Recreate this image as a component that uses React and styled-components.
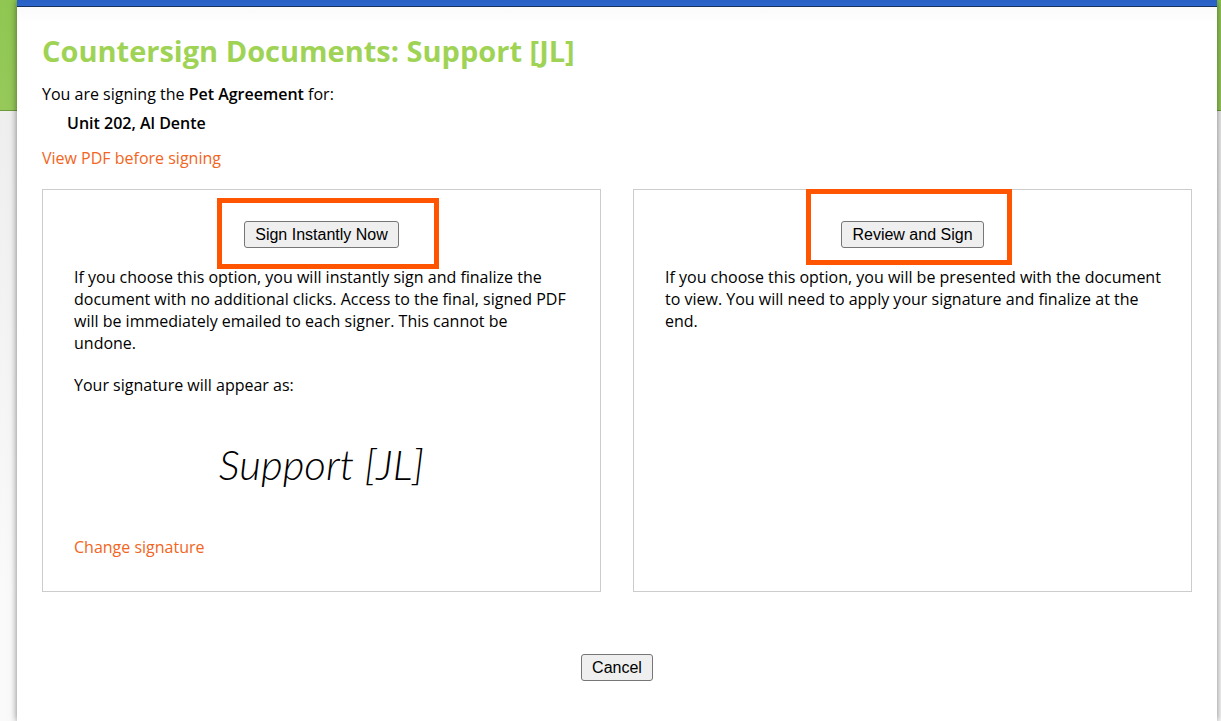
import React from 'react'
import styled, { createGlobalStyle } from 'styled-components';

const App = () => {
  return (
    <Backdrop>
      <GlobalStyle />
      <Page>
        <TopBar />
        <Content>
          <Title>Countersign Documents: Support [JL]</Title>
          <Intro>You are signing the <strong>Pet Agreement</strong> for:</Intro>
          <Signee>Unit 202, Al Dente</Signee>
          <Link href="#pdf">View PDF before signing</Link>

          <Options>
            <Option>
              <ButtonArea>
                <Button type="button">Sign Instantly Now</Button>
                <Highlight $inset="-23px -40px -21px -27px" />
              </ButtonArea>
              <Text>
                If you choose this option, you will instantly sign and finalize the document with no
                additional clicks. Access to the final, signed PDF will be immediately emailed to each
                signer. This cannot be undone.
              </Text>
              <Text>Your signature will appear as:</Text>
              <Signature>Support [JL]</Signature>
              <Link href="#signature">Change signature</Link>
            </Option>

            <Option>
              <ButtonArea>
                <Button type="button">Review and Sign</Button>
                <Highlight $inset="-32px -28px -17px -35px" />
              </ButtonArea>
              <Text>
                If you choose this option, you will be presented with the document to view. You will
                need to apply your signature and finalize at the end.
              </Text>
            </Option>
          </Options>

          <Footer>
            <Button type="button">Cancel</Button>
          </Footer>
        </Content>
      </Page>
    </Backdrop>
  )
}

const GlobalStyle = createGlobalStyle`
    * {
        box-sizing : border-box;
    }

    body {
        margin : 0;
        color : #000;
        font-family : "Trebuchet MS", "Open Sans", sans-serif;
        font-size : 16px;
        line-height : 22px;
    }

    strong {
        font-weight : 600;
    }
`;

const Backdrop = styled.div`
    min-height : 100vh;
    padding : 0 4px 0 17px;
    background :
        linear-gradient(#8fc752, #96c95a) 0 0 / 100% 110px no-repeat,
        linear-gradient(#6f9a3c, #6f9a3c) 0 110px / 100% 1px no-repeat,
        linear-gradient(#eeeeee 111px, #fafafa 600px);
`;

const Page = styled.main`
    min-height : 100vh;
    background-color : #fff;
    box-shadow : 0 0 7px rgba(0, 0, 0, 0.5);
`;

const TopBar = styled.div`
    height : 7px;
    background : linear-gradient(#2860c4, #2b66cc);
    border-bottom : 1px solid #16305f;
`;

const Content = styled.div`
    padding : 26px 25px 40px;
    background : linear-gradient(#fafafa, #fff 16px);
`;

const Title = styled.h1`
    margin : 0 0 14px;
    color : #9fd356;
    font-size : 29px;
    font-weight : bold;
    line-height : 36px;
`;

const Intro = styled.p`
    margin : 0 0 7px;
`;

const Signee = styled.p`
    margin : 0 0 13px;
    padding-left : 25px;
    font-weight : 600;
`;

const Link = styled.a`
    display : inline-block;
    color : #f26522;
    text-decoration : none;
`;

const Options = styled.div`
    display : grid;
    grid-template-columns : 1fr 1fr;
    gap : 32px;
    margin-top : 20px;
`;

const Option = styled.section`
    padding : 31px 31px 33px;
    border : 1px solid #ccc;
`;

const ButtonArea = styled.div`
    position : relative;
    width : fit-content;
    margin : 0 auto 18px;
`;

const Highlight = styled.span`
    position : absolute;
    inset : ${({$inset}) => $inset};
    border : 5px solid #ff5500;
    pointer-events : none;
`;

const Button = styled.button`
    display : block;
    height : 27px;
    padding : 0 10px;
    background-color : #efefef;
    border : 1px solid #767676;
    border-radius : 3px;
    color : #000;
    font-family : "Liberation Sans", Arial, sans-serif;
    font-size : 16px;
    line-height : 24px;
`;

const Text = styled.p`
    margin : 0 -4px 20px 0;
`;

const Signature = styled.div`
    margin : 30px 0 34px;
    font-family : "Lato", sans-serif;
    font-size : 42px;
    font-style : italic;
    font-weight : 300;
    line-height : 76px;
    text-align : center;
`;

const Footer = styled.div`
    display : flex;
    justify-content : center;
    margin-top : 62px;
`;

export default App
